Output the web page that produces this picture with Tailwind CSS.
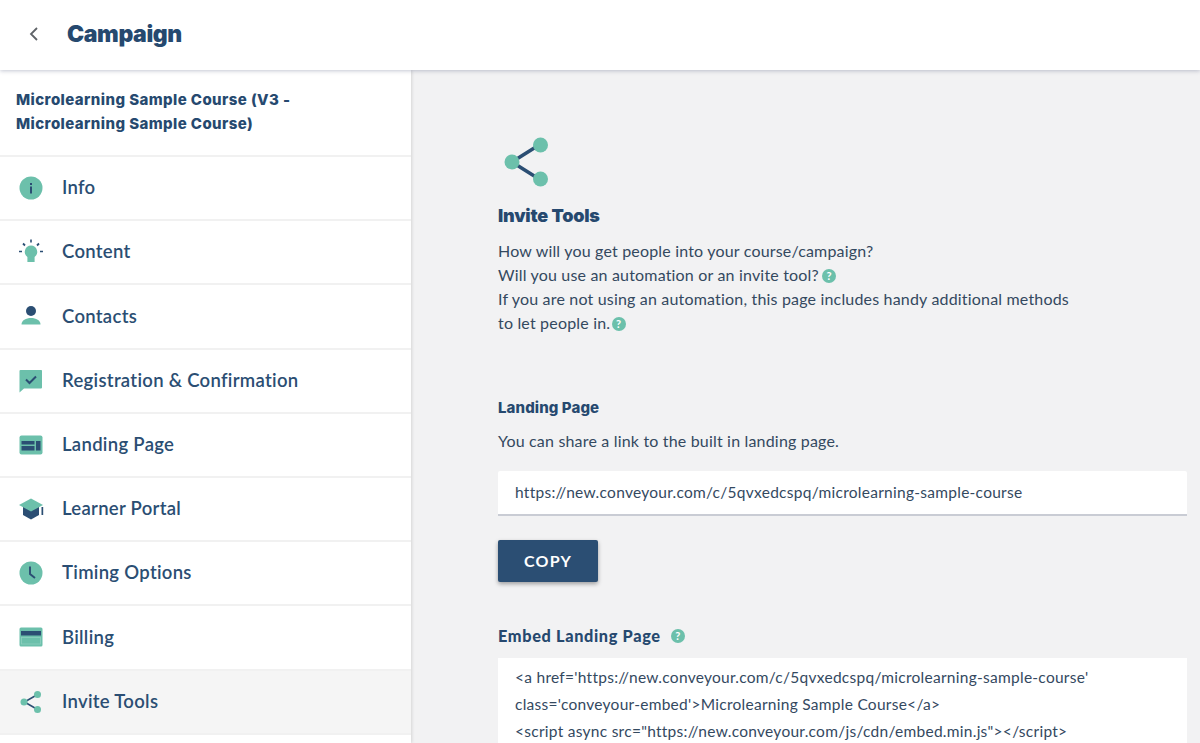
<!DOCTYPE html>
<html><head><meta charset="utf-8"><script src="https://cdn.jsdelivr.net/npm/@tailwindcss/browser@4"></script></head>
<body class="m-0">
<div class="w-[1200px] h-[743px] overflow-hidden bg-[#f2f2f3] flex flex-col font-['Lato','Noto_Sans',sans-serif] text-[#2b4e73]">
<header class="relative z-10 h-[70px] shrink-0 bg-white shadow-[0_1px_4px_rgba(60,70,110,0.3)] flex items-center pl-[28px] pb-[2px]">
<svg width="11" height="14" viewBox="0 0 11 14" class="mr-[28px]"><path d="M9 1 3 7l6 6" fill="none" stroke="#5f6368" stroke-width="1.8"/></svg>
<h1 class="text-[23px] font-black leading-none text-[#26496f] font-['Inter',sans-serif] tracking-[-0.4px]">Campaign</h1>
</header>
<div class="flex flex-1 min-h-0">
<aside class="w-[411px] shrink-0 bg-white shadow-[1px_0_3px_rgba(0,0,0,0.12)] flex flex-col">
<div class="h-[87px] shrink-0 pl-4 pt-[18px] border-b-2 border-[#f1f1f1] font-['Inter',sans-serif] font-extrabold text-[15px] leading-6 text-[#26496f] tracking-[0.42px]">Microlearning Sample Course (V3 -<br>Microlearning Sample Course)</div>
<nav class="flex flex-col text-[18.5px] font-semibold tracking-[0.3px]">
<a class="h-[64.2px] shrink-0 border-b-2 border-[#f1f1f1] flex items-center">
<span class="w-[61px] mr-[1px] flex justify-center"><svg width="24" height="24" viewBox="0 0 24 24"><circle cx="12" cy="12" r="11.5" fill="#6cc0ab"/><rect x="11" y="10.5" width="2" height="7" fill="#2b4e73"/><rect x="11" y="7" width="2" height="2" fill="#2b4e73"/></svg></span>Info</a>
<a class="h-[64.2px] shrink-0 border-b-2 border-[#f1f1f1] flex items-center">
<span class="w-[61px] mr-[1px] flex justify-center"><svg width="26" height="26" viewBox="0 0 26 26"><path d="M13 6.5a6.3 6.3 0 0 1 3.6 11.4V23H9.4v-5.1A6.3 6.3 0 0 1 13 6.5z" fill="#6cc0ab"/><path d="M13 .5v3M1 12.5h3M22 12.5h3" stroke="#2b4e73" stroke-width="1.6" fill="none"/><path d="M5 4.5l2 2M21 4.5l-2 2" stroke="#2b4e73" stroke-width="1.8" fill="none"/></svg></span>Content</a>
<a class="h-[64.2px] shrink-0 border-b-2 border-[#f1f1f1] flex items-center">
<span class="w-[61px] mr-[1px] flex justify-center"><svg width="24" height="24" viewBox="0 0 24 24"><circle cx="12" cy="7" r="5" fill="#2b4e73"/><path d="M2.500 20.500c0-4.300 4.500-6.500 9.500-6.500s9.500 2.200 9.500 6.500z" fill="#6cc0ab"/></svg></span>Contacts</a>
<a class="h-[64.2px] shrink-0 border-b-2 border-[#f1f1f1] flex items-center">
<span class="w-[61px] mr-[1px] flex justify-center"><svg width="24" height="24" viewBox="0 0 24 24"><path d="M1.500 1h21a1 1 0 0 1 .5 1v16.500a1 1 0 0 1-1 1H5L.500 23.500V2a1 1 0 0 1 1-1z" fill="#6cc0ab"/><path d="M7 10.500l3.500 3.500 6.500-6.500" fill="none" stroke="#2b4e73" stroke-width="2"/></svg></span>Registration &amp; Confirmation</a>
<a class="h-[64.2px] shrink-0 border-b-2 border-[#f1f1f1] flex items-center">
<span class="w-[61px] mr-[1px] flex justify-center"><svg width="24" height="20" viewBox="0 0 24 20"><rect x=".5" y=".5" width="23" height="19" rx="2" fill="#6cc0ab"/><rect x="2.500" y="6" width="13" height="3.500" fill="#2b4e73"/><rect x="2.500" y="11" width="13" height="4.500" fill="#2b4e73"/><rect x="17" y="6" width="4.500" height="9.500" fill="#2b4e73"/></svg></span>Landing Page</a>
<a class="h-[64.2px] shrink-0 border-b-2 border-[#f1f1f1] flex items-center">
<span class="w-[61px] mr-[1px] flex justify-center"><svg width="26" height="22" viewBox="0 0 26 22"><path d="M5 8v9l8 4.500 8-4.500V8z" fill="#2b4e73"/><path d="M13 .5 25 7l-12 6.500L1 7z" fill="#6cc0ab"/><rect x="23.500" y="9" width="1.700" height="8" fill="#2b4e73"/></svg></span>Learner Portal</a>
<a class="h-[64.2px] shrink-0 border-b-2 border-[#f1f1f1] flex items-center">
<span class="w-[61px] mr-[1px] flex justify-center"><svg width="24" height="24" viewBox="0 0 24 24"><circle cx="12" cy="12" r="11.500" fill="#6cc0ab"/><path d="M11 5.500V13l5 4" fill="none" stroke="#2b4e73" stroke-width="1.900"/></svg></span>Timing Options</a>
<a class="h-[64.2px] shrink-0 border-b-2 border-[#f1f1f1] flex items-center">
<span class="w-[61px] mr-[1px] flex justify-center"><svg width="24" height="20" viewBox="0 0 24 20"><rect x=".5" y=".5" width="23" height="19" rx="1.500" fill="#6cc0ab"/><rect x="2" y="4" width="20" height="4.500" fill="#2b4e73"/><rect x="2.500" y="10.500" width="19" height="6.500" fill="none" stroke="#8fd0c0" stroke-width=".8"/></svg></span>Billing</a>
<a class="h-[64.2px] shrink-0 border-b-2 border-[#f1f1f1] bg-[#f5f5f5] flex items-center">
<span class="w-[61px] mr-[1px] flex justify-center"><svg width="24" height="24" viewBox="0 0 24 24"><path d="M18.500 4.500 5.500 12l13 7.500" fill="none" stroke="#2b4e73" stroke-width="1.600"/><circle cx="5" cy="12" r="3.500" fill="#6cc0ab"/><circle cx="18.500" cy="4.500" r="3.500" fill="#6cc0ab"/><circle cx="18.500" cy="19.500" r="3.500" fill="#6cc0ab"/></svg></span>Invite Tools</a>
</nav>
</aside>
<main class="flex-1 pl-[87px] pt-[67px] min-w-0">
<svg width="54" height="52" viewBox="0 0 54 52" class="ml-[5px] block"><path d="M36 8 9 25l27 17" fill="none" stroke="#2b4e73" stroke-width="3.600"/><circle cx="9" cy="25" r="7.500" fill="#6cc0ab"/><circle cx="37.500" cy="8" r="7.500" fill="#6cc0ab"/><circle cx="37.500" cy="42" r="7.500" fill="#6cc0ab"/></svg>
<h2 class="mt-[15px] font-['Inter',sans-serif] font-black text-[18px] leading-6 text-[#26496f] tracking-[-0.2px]">Invite Tools</h2>
<p class="mt-[11px] text-[16px] leading-6 text-[#34495f] tracking-[0.18px]">How will you get people into your course/campaign?<br>Will you use an automation or an invite tool? <span class="inline-block ml-[-1px] w-[14px] h-[14px] rounded-full bg-[#6cc0ab] text-white text-[11px] leading-[14px] font-bold text-center tracking-normal align-[1px]">?</span><br>If you are not using an automation, this page includes handy additional methods<br>to let people in. <span class="inline-block ml-[-3px] w-[14px] h-[14px] rounded-full bg-[#6cc0ab] text-white text-[11px] leading-[14px] font-bold text-center tracking-normal align-[1px]">?</span></p>
<h3 class="mt-[61px] font-['Inter',sans-serif] font-extrabold text-[15px] leading-6 text-[#26496f] tracking-[0.1px]">Landing Page</h3>
<p class="mt-[9px] text-[16px] leading-6 text-[#34495f] tracking-[0.18px]">You can share a link to the built in landing page.</p>
<div class="mt-[18px] w-[689px] h-[45px] bg-white border-b-2 border-[#c9ccd4] rounded-t-[2px] pl-[17px] flex items-center text-[15.500px] text-[#34495f] tracking-[0.27px]">https://new.conveyour.com/c/5qvxedcspq/microlearning-sample-course</div>
<button class="block mt-[24px] w-[100px] h-[42px] bg-[#2b4e73] text-white rounded-[2px] font-bold text-[16px] tracking-[1.2px] shadow-[0_2px_4px_rgba(0,0,0,0.35)]">COPY</button>
<div class="mt-[42px] flex items-center gap-[10px] h-6"><h3 class="font-['Lato',sans-serif] font-black text-[16.300px] leading-6 text-[#26496f] tracking-[0.65px]">Embed Landing Page</h3><span class="w-[14px] h-[14px] rounded-full bg-[#6cc0ab] text-white text-[11px] leading-[14px] font-bold text-center">?</span></div>
<div class="mt-[10px] w-[689px] h-[200px] bg-white pl-[17px] pt-[6px] text-[15.500px] leading-[27px] text-[#34495f] tracking-[0.27px]">&lt;a href='https://new.conveyour.com/c/5qvxedcspq/microlearning-sample-course'<br>class='conveyour-embed'&gt;Microlearning Sample Course&lt;/a&gt;<br>&lt;script async src="https://new.conveyour.com/js/cdn/embed.min.js"&gt;&lt;/script&gt;</div>
</main>
</div>
</div>
</body></html>
